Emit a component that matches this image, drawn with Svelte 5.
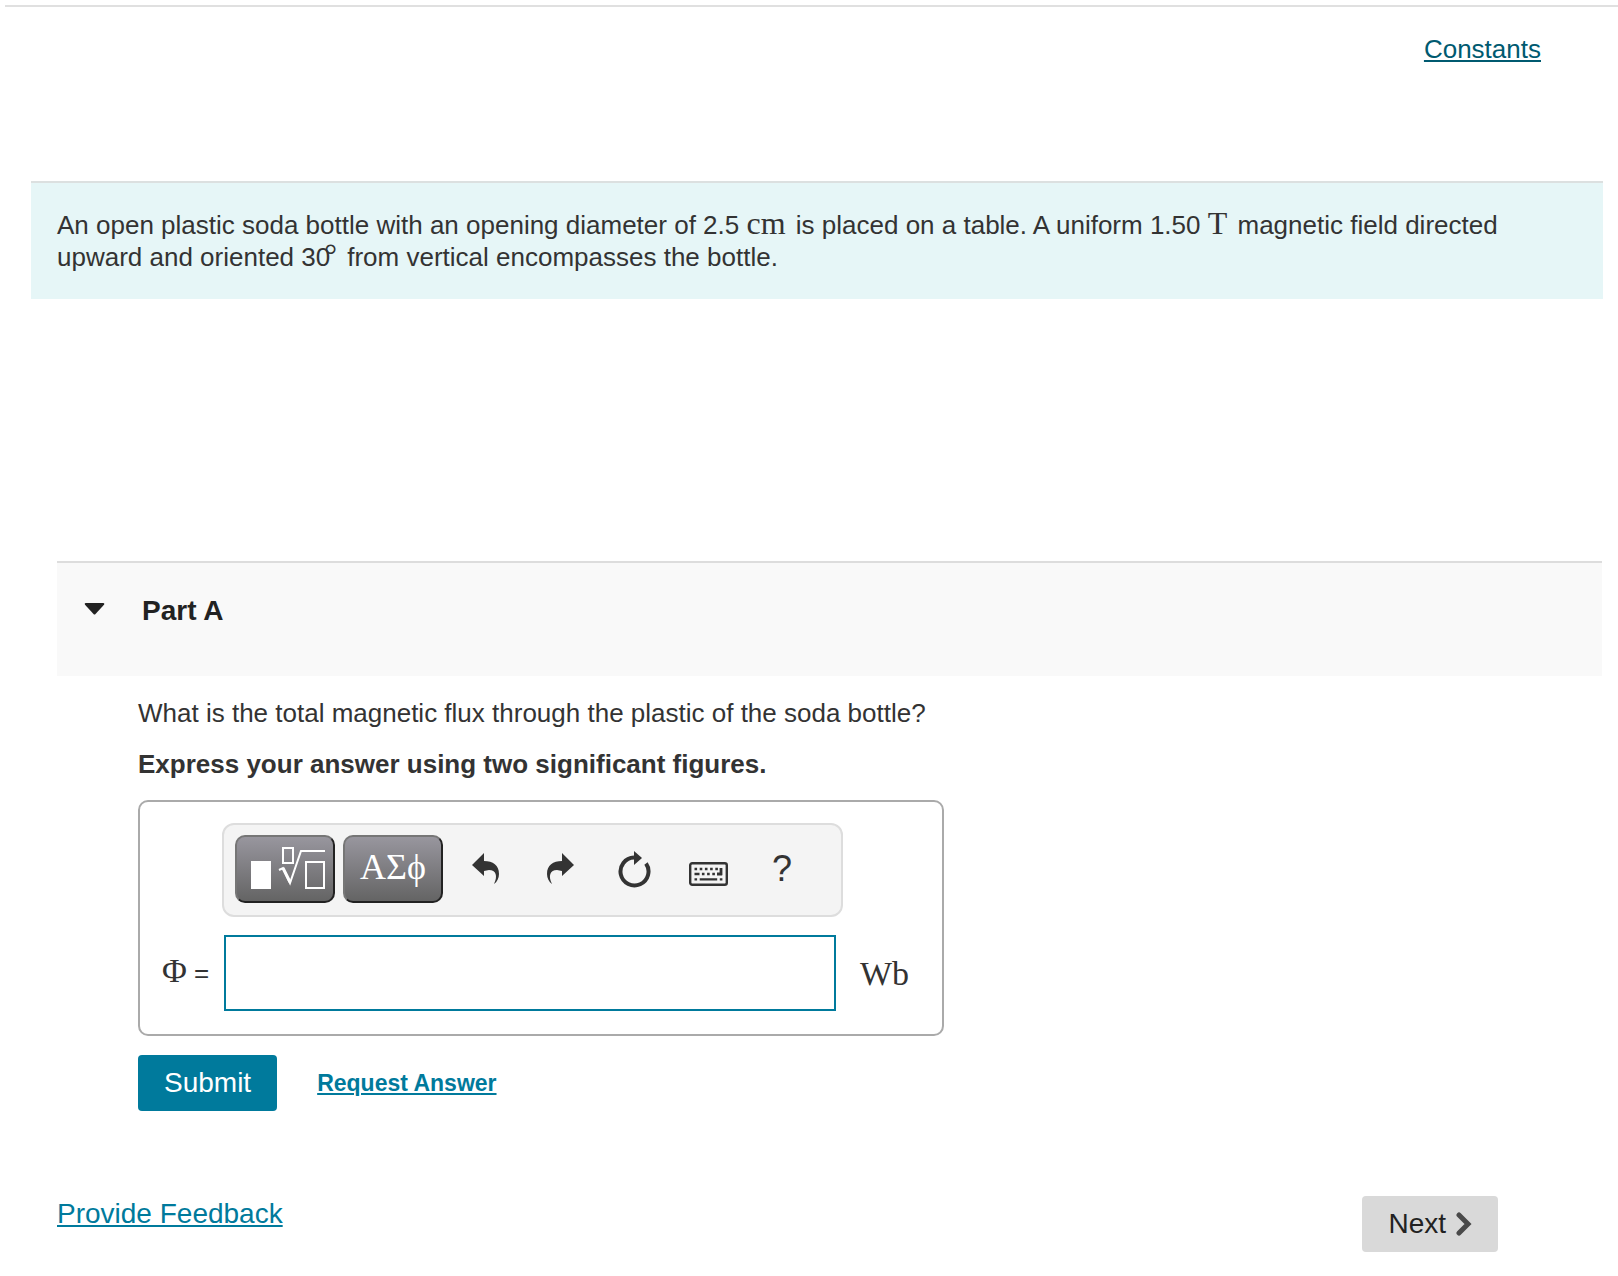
<script lang="ts">
  let answer = $state('');
  let open = $state(true);
</script>

<div class="page">
  <header class="top">
    <a href="#constants">Constants</a>
  </header>

  <section class="intro">
    <p>
      An open plastic soda bottle with an opening diameter of 2.5 <span class="math unit">cm</span> is placed on a table. A uniform 1.50 <span class="math unit">T</span> magnetic field directed upward and oriented 30<span class="math degree">°</span> from vertical encompasses the bottle.
    </p>
  </section>

  <main>
    <h2 class="part">
      <button type="button" aria-expanded={open} onclick={() => (open = !open)}>
        <svg width="22" height="16" viewBox="0 0 22 16" aria-hidden="true">
          <path d="M1.500 0h18q1.500.5.5 1.800L11.500 11q-1 1-2 0L1 1.800Q0 .5 1.500 0z" fill="#222" />
        </svg>
        <span>Part A</span>
      </button>
    </h2>

    {#if open}
      <div class="body">
        <p>What is the total magnetic flux through the plastic of the soda bottle?</p>
        <p class="instructions">Express your answer using two significant figures.</p>

        <div class="answer">
          <div class="toolbar">
            <button type="button" class="palette" aria-label="Templates">
              <svg width="96" height="64" viewBox="0 0 96 64" fill="none" stroke="#fff" stroke-width="2" aria-hidden="true">
                <rect x="14" y="24" width="20" height="28" fill="#fff" stroke="none" />
                <rect x="46" y="11" width="10" height="15" />
                <path d="M42 33l4-2 7 15 11-32h24" />
                <path d="M46 31l7 14" stroke-width="3" />
                <rect x="69" y="25" width="18" height="26" />
              </svg>
            </button>
            <button type="button" class="palette greek" aria-label="Symbols">ΑΣϕ</button>

            <div class="tools">
              <button type="button" aria-label="Undo">
                <svg width="28" height="34" viewBox="0 0 28 34" aria-hidden="true">
                  <path d="M0 13L12 1v8c9 0 15 4 15 13 0 4-2 8-5 10 4-8 2-14-5-14l-5 1v5z" fill="#333" />
                </svg>
              </button>
              <button type="button" aria-label="Redo">
                <svg width="28" height="34" viewBox="0 0 28 34" aria-hidden="true">
                  <path d="M28 13L16 1v8C7 9 1 13 1 22c0 4 2 8 5 10-4-8-2-14 5-14l5 1v5z" fill="#333" />
                </svg>
              </button>
              <button type="button" aria-label="Reset">
                <svg width="34" height="38" viewBox="0 0 34 38" aria-hidden="true">
                  <path d="M17 7.500A14 14 0 1 0 29 13.500" fill="none" stroke="#333" stroke-width="4" />
                  <path d="M17 1l8 7-8 7z" fill="#333" />
                </svg>
              </button>
              <button type="button" class="keyboard" aria-label="Keyboard">
                <svg width="39" height="24" viewBox="0 0 39 24" fill="none" stroke="#333" aria-hidden="true">
                  <rect x="1.200" y="1.200" width="36.600" height="21.600" rx="2" stroke-width="2.400" />
                  <path d="M5.500 7h2.600m2.600 0h2.600m2.600 0h2.600m2.600 0h2.600m2.600 0h2.600M5.500 12h5m2.400 0h2.600m2.600 0h2.600m2.600 0h2.600M5.500 17.300h2.600m2.600 0h17.500m2.600 0h2.600" stroke-width="2.300" />
                  <path d="M32 6v7.200M28 12h5" stroke-width="2.800" />
                </svg>
              </button>
              <button type="button" aria-label="Help">?</button>
            </div>
          </div>

          <div class="entry">
            <label for="flux"><span class="math">Φ</span> =</label>
            <input id="flux" type="text" autocomplete="off" bind:value={answer} />
            <span class="math">Wb</span>
          </div>
        </div>

        <div class="actions">
          <button type="button" class="submit">Submit</button>
          <a href="#request">Request Answer</a>
        </div>
      </div>
    {/if}
  </main>

  <footer>
    <a href="#feedback">Provide Feedback</a>
    <button type="button" class="next">
      Next
      <svg width="16" height="24" viewBox="0 0 16 24" aria-hidden="true">
        <path d="M3 3l9 9-9 9" fill="none" stroke="#4a4a4a" stroke-width="5" stroke-linecap="round" />
      </svg>
    </button>
  </footer>
</div>

<style>
  :global(body) { margin: 0; background: #fff; }

  .page {
    font-family: "Liberation Sans", Arial, sans-serif;
    font-size: 26px;
    line-height: 32px;
    color: #333;
    padding-top: 5px;
  }
  p, h2 { margin: 0; }
  a { color: #007a9c; text-decoration-thickness: 2px; text-underline-offset: 2px; }
  button { font: inherit; color: inherit; margin: 0; padding: 0; border: 0; background: none; cursor: pointer; }
  svg { display: block; }

  .math { font-family: "Liberation Serif", "Times New Roman", serif; font-size: 32px; line-height: 1px; }
  .unit { margin-right: 3px; }
  .degree { margin: 0 3px 0 -6px; }

  .top {
    display: flex;
    justify-content: flex-end;
    margin-left: 5px;
    padding: 26px 77px 116px 0;
    border-top: 2px solid #e0e0e0;
  }
  .top a { color: #005a70; }

  .intro {
    margin: 0 15px 0 31px;
    padding: 26px;
    border-top: 2px solid #dce0e0;
    background: #e6f6f7;
  }

  main { margin: 262px 16px 0 57px; }

  .part { border-top: 2px solid #ddd; background: #f9f9f9; padding: 32px 27px 49px; font-size: 28px; color: #222; }
  .part button { display: flex; align-items: center; gap: 36px; font-weight: bold; }

  .body { padding: 21px 0 0 81px; }
  .instructions { margin: 19px 0 20px; font-weight: bold; }

  .answer { width: max-content; border: 2px solid #aaa; border-radius: 10px; padding: 21px 33px 23px 22px; }

  .toolbar {
    display: flex;
    gap: 8px;
    width: 606px;
    margin-left: 60px;
    padding: 10px 0 12px 11px;
    border: 2px solid #ddd;
    border-radius: 12px;
    background: #f4f4f4;
  }
  .palette {
    width: 100px;
    height: 68px;
    border: 2px solid;
    border-color: #767676 #222 #222 #767676;
    border-radius: 10px;
    background: linear-gradient(#98969e, #646464);
    color: #fff;
  }
  .greek { padding-bottom: 4px; font-family: "Liberation Serif", "Times New Roman", serif; font-size: 36px; }
  .tools { display: flex; margin-left: -2px; }
  .tools button { display: flex; justify-content: center; align-items: center; width: 74px; font-size: 36px; }
  .tools .keyboard { padding-top: 10px; }

  .entry { display: flex; align-items: center; margin-top: 18px; }
  .entry .math { font-size: 34px; }
  .entry label { width: 62px; }
  .entry input {
    box-sizing: border-box;
    width: 612px;
    height: 76px;
    margin-right: 24px;
    padding: 0 12px;
    border: 2px solid #007a9c;
    font: inherit;
    outline: none;
  }

  .actions { display: flex; align-items: center; gap: 40px; margin-top: 19px; }
  .actions a { font-size: 23px; font-weight: bold; }
  .submit { height: 56px; padding: 0 26px; border-radius: 4px; background: #007a9c; color: #fff; font-size: 28px; }

  footer { display: flex; justify-content: space-between; align-items: center; margin: 85px 120px 0 57px; font-size: 28px; }
  footer a { padding-bottom: 20px; }
  .next { display: flex; align-items: center; gap: 10px; height: 56px; padding: 0 26px; border-radius: 4px; background: #d9d9d9; color: #222; }
</style>
